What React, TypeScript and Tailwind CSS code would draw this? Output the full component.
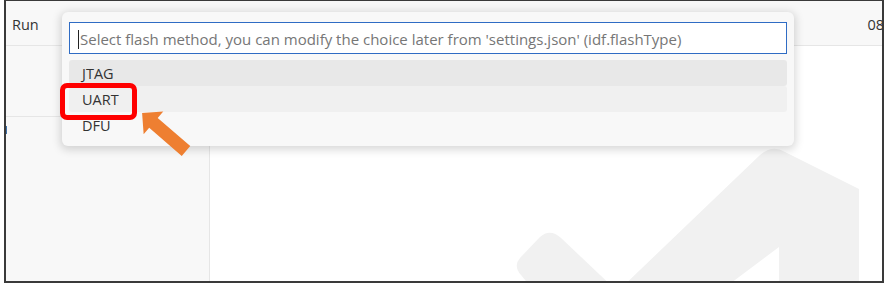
import React from 'react';

const font = { fontFamily: '"Open Sans", "Noto Sans", sans-serif' };

function Watermark() {
    // faint editor logo, drawn in page coordinates
    return (
        <svg className="absolute inset-0" width="672" height="235" viewBox="210 46 672 235">
            <path d="M 520 258 Q 513 266 521 275 L 535 292 L 618 292 L 561 238 Q 550 228 540 237 Z" fill="#f1f1f1" />
            <path d="M 617 292 L 760 155 Q 772 144 785 152 L 859 189 L 859 292 L 779 292 L 779 247 L 719 292 Z" fill="#f1f1f1" />
        </svg>
    );
}

function QuickPick() {
    const items = ['JTAG', 'UART', 'DFU'];
    return (
        <div className="absolute left-[62px] top-[12px] w-[732px] h-[134px] bg-[#f8f8f8] rounded-[6px] shadow-[0_2px_9px_2px_rgba(0,0,0,0.15)] px-[7px] pt-[10px]">
            <div className="h-[32px] bg-white border border-[#2f6cc4] flex items-center pl-[8px] pt-[2px]">
                <span className="w-px h-[19px] bg-[#222] mr-[1px]" />
                <span className="text-[15px] text-[#767676] whitespace-nowrap" style={font}>
                    Select flash method, you can modify the choice later from 'settings.json' (idf.flashType)
                </span>
            </div>
            <div className="mt-[6px] flex flex-col">
                {items.map((it, i) => (
                    <div
                        key={it}
                        className={
                            'h-[26px] rounded-[3px] flex items-center pl-[13px] pt-[2px] text-[14.5px] text-[#333] ' +
                            (i === 0 ? 'bg-[#e8e8e8]' : i === 1 ? 'bg-[#f0f0f0]' : '')
                        }
                        style={font}
                    >
                        {it}
                    </div>
                ))}
            </div>
        </div>
    );
}

export default function App() {
    return (
        <div className="relative w-[888px] h-[285px] bg-white pl-[4px]">
            <div className="w-[880px] h-[283px] border-x-2 border-b-2 border-t border-[#3a3a3a] flex flex-col overflow-hidden">
                {/* tab bar */}
                <div className="h-[45px] shrink-0 bg-[#f8f8f8] border-b border-[#e6e6e6] flex items-center justify-between pl-[6px] pt-[3px]">
                    <span className="text-[14.5px] text-[#333]" style={font}>Run</span>
                    <span className="text-[14.5px] text-[#333] mr-[-2px]" style={font}>08</span>
                </div>

                <div className="flex-1 flex">
                    {/* sidebar */}
                    <div className="w-[204px] shrink-0 bg-[#f8f8f8] border-r border-[#e6e6e6] flex flex-col">
                        <div className="h-[71px] border-b border-[#e6e6e6]" />
                        <div className="mt-[9px] -ml-[1px] w-[2px] h-[8px] bg-[#3d6fa6]" />
                    </div>

                    {/* editor */}
                    <div className="relative flex-1 bg-white">
                        <Watermark />
                    </div>
                </div>
            </div>

            <QuickPick />

            {/* callout */}
            <div className="absolute left-[60px] top-[83px] w-[77px] h-[37px] border-[5px] border-[#ff0000] rounded-[7px]" />
            <svg className="absolute left-0 top-0 pointer-events-none" width="888" height="285">
                <polygon
                    points="0,-6.5 43,-6.5 43,-15 58,0 43,15 43,6.5 0,6.5"
                    fill="#ee7f31"
                    transform="translate(186 151) rotate(220.8)"
                />
            </svg>
        </div>
    );
}
